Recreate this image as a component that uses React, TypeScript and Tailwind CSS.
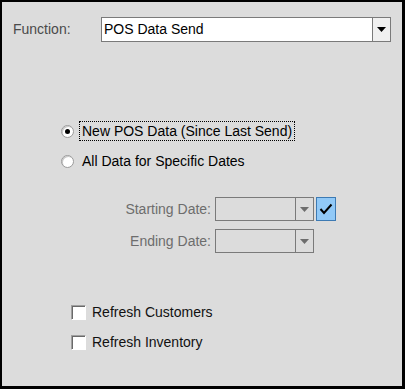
import React from 'react'

const font = { fontFamily: '"Liberation Sans", Arial, sans-serif' }

function Arrow({ grey }: { grey?: boolean }) {
    return (
        <svg width="9" height="5" viewBox="0 0 9 5">
            <polygon points="0,0 9,0 4.5,5" fill={grey ? '#6d6d6d' : '#000'} />
        </svg>
    )
}

function Radio({ checked, label, focused }: { checked?: boolean; label: string; focused?: boolean }) {
    return (
        <div className="flex h-[20px] items-center pl-[59px]">
            <span className="flex h-[13px] w-[13px] items-center justify-center rounded-full border border-[#9a9a9a] bg-white shadow-[inset_1px_1px_0_#c8c8c8]">
                {checked && <span className="h-[5px] w-[5px] rounded-full bg-black" />}
            </span>
            <span
                className={
                    'ml-[5px] flex h-[20px] items-center pl-[2px] pr-[2px] text-[14px] text-black ' +
                    (focused ? 'border border-dotted border-black' : 'border border-transparent')
                }
            >
                {label}
            </span>
        </div>
    )
}

function Check({ label }: { label: string }) {
    return (
        <div className="flex h-[20px] items-center pl-[69px]">
            <span className="h-[15px] w-[15px] border border-t-[#a0a0a0] border-l-[#a0a0a0] border-r-white border-b-white bg-white shadow-[inset_1px_1px_0_#696969]" />
            <span className="ml-[6px] text-[14px] text-[#111]">{label}</span>
        </div>
    )
}

function DateRow({ label, check }: { label: string; check?: boolean }) {
    return (
        <div className="flex h-[24px] items-center">
            <span className="w-[213px] pr-[4px] text-right text-[14px] text-[#6d6d6d]">{label}</span>
            <div className="flex h-[24px] w-[99px] border border-[#7a7a7a]">
                <div className="flex-1" />
                <div className="flex w-[18px] items-center justify-center border-l border-[#7a7a7a]">
                    <Arrow grey />
                </div>
            </div>
            {check && (
                <div className="ml-[2px] flex h-[24px] w-[20px] items-center justify-center border border-[#3d7ab3] bg-[#91c9f7]">
                    <svg width="14" height="12" viewBox="0 0 14 12">
                        <polyline points="1.5,6 5,10 12.5,1.5" fill="none" stroke="#000" strokeWidth="2" />
                    </svg>
                </div>
            )}
        </div>
    )
}

export default function App() {
    return (
        <div
            className="h-[389px] w-[405px] border-t-2 border-l-2 border-r-[3px] border-b-[3px] border-black bg-[#dcdcdc]"
            style={font}
        >
            <div className="mt-[15px] flex h-[25px] items-center">
                <span className="w-[99px] pl-[11px] text-[14px] text-[#4a4a4a]">Function:</span>
                <div className="flex h-[25px] w-[290px] border border-[#7a7a7a] bg-white">
                    <span className="flex flex-1 items-center pl-[2px] text-[14px] text-black">POS Data Send</span>
                    <div className="flex w-[18px] items-center justify-center border-l border-[#7a7a7a] bg-[#f0f0f0]">
                        <Arrow />
                    </div>
                </div>
            </div>

            <div className="mt-[79px]">
                <Radio checked focused label="New POS Data (Since Last Send)" />
            </div>
            <div className="mt-[10px]">
                <Radio label="All Data for Specific Dates" />
            </div>

            <div className="mt-[26px]">
                <DateRow label="Starting Date:" check />
            </div>
            <div className="mt-[8px]">
                <DateRow label="Ending Date:" />
            </div>

            <div className="mt-[49px]">
                <Check label="Refresh Customers" />
            </div>
            <div className="mt-[10px]">
                <Check label="Refresh Inventory" />
            </div>
        </div>
    )
}
